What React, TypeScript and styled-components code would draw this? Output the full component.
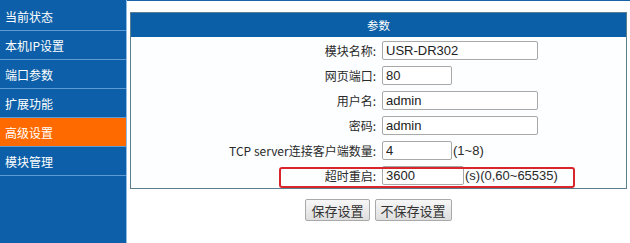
import React from "react";
import styled, { createGlobalStyle } from "styled-components";

const GlobalStyle = createGlobalStyle`
  html, body {
    margin: 0;
    padding: 0;
    background: #ffffff;
  }
  body {
    font-family: "Noto Sans CJK SC", "Liberation Sans", sans-serif;
  }
`;

const Page = styled.div`
  display: flex;
  width: 630px;
  height: 243px;
  overflow: hidden;
`;

const Sidebar = styled.nav`
  width: 126px;
  flex: none;
  padding-top: 2px;
  background: #0c5fa8;
  border-right: 1px solid #8dbbe3;
  box-sizing: content-box;
`;

const NavItem = styled.div<{ $active?: boolean }>`
  height: 28px;
  display: flex;
  align-items: center;
  padding-left: 5px;
  font-size: 12px;
  color: #ffffff;
  background: ${(p) => (p.$active ? "#ff6a00" : "transparent")};
  border-bottom: 1px solid #5d9bd2;
`;

const Main = styled.main`
  flex: 1;
  border-top: 1px solid #1a62a8;
  padding: 11px 0 0 3px;
`;

const Panel = styled.section`
  width: 495px;
  border: 1px solid #5b7f8f;
  background: #fcfeff;
`;

const PanelHeader = styled.div`
  height: 24px;
  display: flex;
  align-items: center;
  justify-content: center;
  background: #0a5fa7;
  color: #ffffff;
  font-size: 11.5px;
`;

const PanelBody = styled.div`
  padding-top: 1px;
`;

const Row = styled.div<{ $highlight?: boolean }>`
  position: relative;
  height: 25px;
  display: grid;
  grid-template-columns: 245px auto;
  column-gap: 6px;
  align-items: center;

  ${(p) =>
    p.$highlight &&
    `
    &::after {
      content: "";
      position: absolute;
      left: 148px;
      top: 4px;
      bottom: 0;
      width: 296px;
      border: 2px solid #d8262c;
      border-radius: 3px;
      box-sizing: border-box;
      pointer-events: none;
    }
  `}
`;

const Label = styled.label`
  text-align: right;
  font-size: 12px;
  color: #2a2a2a;
  white-space: nowrap;
`;

const Field = styled.div`
  display: flex;
  align-items: center;
  gap: 1px;
`;

const Input = styled.input<{ $w: number }>`
  width: ${(p) => p.$w}px;
  height: 19px;
  box-sizing: border-box;
  margin: 0;
  padding: 0 3px;
  border: 1px solid #a8a8a8;
  border-radius: 2px;
  background: #ffffff;
  font-family: "Liberation Sans", Arial, sans-serif;
  font-size: 13px;
  color: #222222;
  outline: none;
`;

const Hint = styled.span`
  font-family: "Liberation Sans", Arial, sans-serif;
  font-size: 13px;
  color: #2a2a2a;
`;

const Actions = styled.div`
  width: 497px;
  display: flex;
  justify-content: center;
  gap: 5px;
  margin-top: 10px;
`;

const Button = styled.button`
  height: 22px;
  padding: 0 5px;
  border: 1px solid #a9a9a9;
  border-radius: 2px;
  background: linear-gradient(#f7f7f7, #dedede);
  font-family: "Noto Sans CJK SC", sans-serif;
  font-size: 13px;
  color: #333333;
  cursor: pointer;
`;

const navItems = ["当前状态", "本机IP设置", "端口参数", "扩展功能", "高级设置", "模块管理"];

const fields = [
  { label: "模块名称:", value: "USR-DR302", w: 156 },
  { label: "网页端口:", value: "80", w: 70 },
  { label: "用户名:", value: "admin", w: 156 },
  { label: "密码:", value: "admin", w: 156 },
  { label: "TCP server连接客户端数量:", value: "4", w: 70, hint: "(1~8)" },
  { label: "超时重启:", value: "3600", w: 82, hint: "(s)(0,60~65535)", highlight: true },
];

const App: React.FC = () => {
  return (
    <>
      <GlobalStyle />
      <Page>
        <Sidebar>
          {navItems.map((item) => (
            <NavItem key={item} $active={item === "高级设置"}>
              {item}
            </NavItem>
          ))}
        </Sidebar>
        <Main>
          <Panel>
            <PanelHeader>参数</PanelHeader>
            <PanelBody>
              {fields.map((f) => (
                <Row key={f.label} $highlight={f.highlight}>
                  <Label>{f.label}</Label>
                  <Field>
                    <Input $w={f.w} defaultValue={f.value} />
                    {f.hint && <Hint>{f.hint}</Hint>}
                  </Field>
                </Row>
              ))}
            </PanelBody>
          </Panel>
          <Actions>
            <Button>保存设置</Button>
            <Button>不保存设置</Button>
          </Actions>
        </Main>
      </Page>
    </>
  );
};

export default App;
